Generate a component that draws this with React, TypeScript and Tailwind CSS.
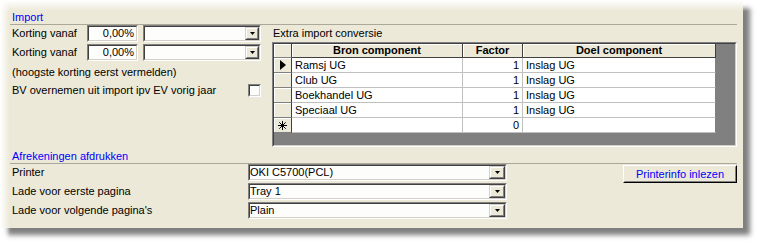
import React from "react";

const rows = [
  { bron: "Ramsj UG", factor: "1", doel: "Inslag UG", current: true },
  { bron: "Club UG", factor: "1", doel: "Inslag UG" },
  { bron: "Boekhandel UG", factor: "1", doel: "Inslag UG" },
  { bron: "Speciaal UG", factor: "1", doel: "Inslag UG" },
];

function Sunken({ className = "", children }: { className?: string; children?: React.ReactNode }) {
  return (
    <div className={`border border-t-[#808080] border-l-[#808080] border-b-white border-r-white ${className}`}>
      <div className="h-full border border-t-[#404040] border-l-[#404040] border-b-[#d4d0c8] border-r-[#d4d0c8] bg-[#fdfdfb] flex items-center">
        {children}
      </div>
    </div>
  );
}

function DropButton({ w }: { w: string }) {
  return (
    <div className={`${w} h-full ml-auto border border-t-[#d4d0c8] border-l-[#d4d0c8] border-b-[#404040] border-r-[#404040]`}>
      <div className="h-full flex items-center justify-center bg-[#ECE9D8] border border-t-white border-l-white border-b-[#808080] border-r-[#808080]">
        <svg width="5" height="3" viewBox="0 0 5 3">
          <polygon points="0,0 5,0 2.5,3" fill="#000" />
        </svg>
      </div>
    </div>
  );
}

function Combo({ text, width, btn }: { text: string; width: string; btn: string }) {
  return (
    <Sunken className={`${width} h-[17px]`}>
      <span className="flex-1 leading-[13px] whitespace-nowrap">{text}</span>
      <DropButton w={btn} />
    </Sunken>
  );
}

function SelectorCell({ children }: { children?: React.ReactNode }) {
  return (
    <div className="w-[18px] h-full flex items-center justify-center bg-[#ECE9D8] border-r border-b border-r-[#404040] border-b-[#808080] shadow-[inset_1px_1px_0_white]">
      {children}
    </div>
  );
}

export default function App() {
  return (
    <div className="relative w-[765px] h-[252px] bg-white overflow-hidden font-['Liberation_Sans',Arial,sans-serif] text-[11px] text-black">
      <div className="relative w-[743px] h-[228px] bg-[#ECE9D8] shadow-[7px_7px_5px_rgba(0,0,0,0.5)]">
        {/* faint strip where the form above was cut off */}
        <div className="h-[11px]" />

        <div className="ml-[10px] w-[727px]">
          <div className="h-[13px] leading-[13px] pl-[2px] text-[#0000ff]">Import</div>
          <div className="h-px bg-[#aca899]" />

          <div className="flex gap-[10px]">
            {/* left column */}
            <div className="w-[252px] pl-[2px] flex flex-col">
              <div className="h-[17px] flex items-center">
                <span className="w-[75px]">Korting vanaf</span>
                <Sunken className="w-[51px] h-[17px]">
                  <span className="flex-1 text-right pr-[2px] leading-[13px]">0,00%</span>
                </Sunken>
                <div className="w-[5px]" />
                <Combo text="" width="w-[118px]" btn="w-[14px]" />
              </div>
              <div className="h-[17px] mt-[2px] flex items-center">
                <span className="w-[75px]">Korting vanaf</span>
                <Sunken className="w-[51px] h-[17px]">
                  <span className="flex-1 text-right pr-[2px] leading-[13px]">0,00%</span>
                </Sunken>
                <div className="w-[5px]" />
                <Combo text="" width="w-[118px]" btn="w-[14px]" />
              </div>
              <div className="h-[16px] mt-[3px] leading-[16px]">(hoogste korting eerst vermelden)</div>
              <div className="h-[16px] mt-[2px] flex items-center">
                <span>BV overnemen uit import ipv EV vorig jaar</span>
                <Sunken className="w-[13px] h-[13px] ml-auto mr-[1px]" />
              </div>
            </div>

            {/* right column: datasheet */}
            <div className="w-[465px] flex flex-col">
              <div className="h-[17px] leading-[17px] pl-[1px]">Extra import conversie</div>
              <div className="h-[105px] border border-t-[#808080] border-l-[#808080] border-b-white border-r-white">
                <div className="h-full bg-[#808080] border border-t-[#404040] border-l-[#404040] border-b-[#d4d0c8] border-r-[#d4d0c8]">
                  <div className="flex h-[14px]">
                    <SelectorCell />
                    {[
                      ["Bron component", "w-[171px]"],
                      ["Factor", "w-[60px]"],
                      ["Doel component", "w-[193px]"],
                    ].map(([label, w]) => (
                      <div
                        key={label}
                        className={`${w} h-full bg-[#ECE9D8] border-r border-b border-[#404040] shadow-[inset_1px_1px_0_white] font-bold text-center leading-[13px]`}
                      >
                        {label}
                      </div>
                    ))}
                  </div>
                  {rows.map((r) => (
                    <div key={r.bron} className="flex h-[15px]">
                      <SelectorCell>
                        {r.current && (
                          <svg width="6" height="10" viewBox="0 0 6 10">
                            <polygon points="0,0 6,5 0,10" fill="#000" />
                          </svg>
                        )}
                      </SelectorCell>
                      <div className="w-[171px] bg-white border-r border-b border-[#c0c0c0] pl-[3px] leading-[14px]">{r.bron}</div>
                      <div className="w-[60px] bg-white border-r border-b border-[#c0c0c0] pr-[3px] text-right leading-[14px]">{r.factor}</div>
                      <div className="w-[193px] bg-white border-r border-b border-r-[#808080] border-b-[#c0c0c0] pl-[3px] leading-[14px]">{r.doel}</div>
                    </div>
                  ))}
                  <div className="flex h-[15px]">
                    <SelectorCell>
                      <svg width="9" height="9" viewBox="0 0 9 9" stroke="#000" strokeWidth="1">
                        <line x1="4.5" y1="0" x2="4.5" y2="9" />
                        <line x1="0" y1="4.5" x2="9" y2="4.5" />
                        <line x1="1.3" y1="1.3" x2="7.7" y2="7.7" />
                        <line x1="7.7" y1="1.3" x2="1.3" y2="7.7" />
                      </svg>
                    </SelectorCell>
                    <div className="w-[171px] bg-white border-r border-b border-[#c0c0c0]" />
                    <div className="w-[60px] bg-white border-r border-b border-[#c0c0c0] pr-[3px] text-right leading-[14px]">0</div>
                    <div className="w-[193px] bg-white border-r border-b border-r-[#808080] border-b-[#c0c0c0]" />
                  </div>
                </div>
              </div>
            </div>
          </div>

          <div className="h-[13px] mt-[3px] leading-[13px] pl-[2px] text-[#0000ff]">Afrekeningen afdrukken</div>
          <div className="h-px bg-[#aca899]" />

          <div className="flex">
            <div className="flex flex-col gap-[2px]">
              {[
                ["Printer", "OKI C5700(PCL)"],
                ["Lade voor eerste pagina", "Tray 1"],
                ["Lade voor volgende pagina's", "Plain"],
              ].map(([label, value]) => (
                <div key={label} className="flex items-center h-[17px]">
                  <span className="w-[238px] pl-[2px]">{label}</span>
                  <Combo text={value} width="w-[259px]" btn="w-[16px]" />
                </div>
              ))}
            </div>
            <div className="ml-auto mt-[1px] w-[114px] h-[18px] border border-t-white border-l-white border-b-black border-r-black">
              <div className="h-full bg-[#ECE9D8] border border-t-[#ECE9D8] border-l-[#ECE9D8] border-b-[#808080] border-r-[#808080] flex items-center justify-center text-[#0000ff]">
                Printerinfo inlezen
              </div>
            </div>
          </div>
        </div>
      </div>

      {/* faded torn edges of the screenshot */}
      <div className="absolute left-0 top-0 w-full h-[11px] bg-gradient-to-b from-white to-transparent" />
      <div className="absolute left-0 top-0 w-[10px] h-full bg-gradient-to-r from-white to-transparent" />
    </div>
  );
}
